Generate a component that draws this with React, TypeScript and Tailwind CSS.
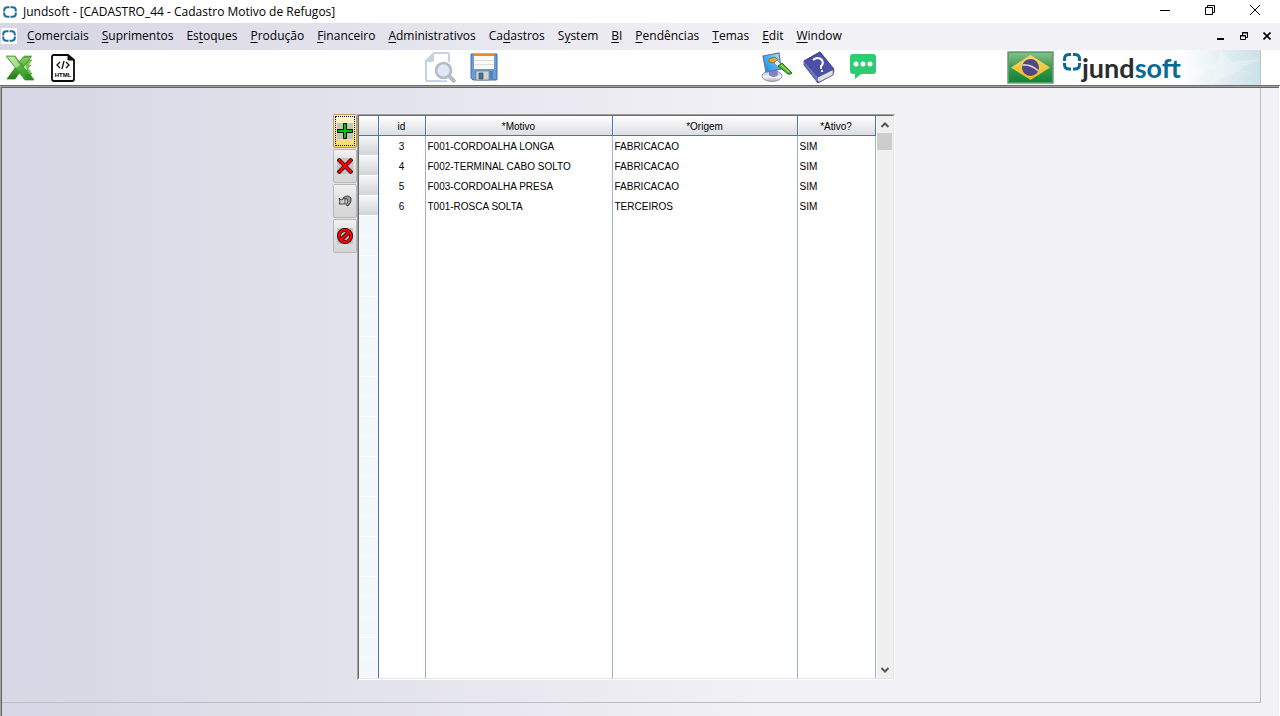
import type { ReactNode } from 'react';

type MenuItem = { before: string; key: string; after: string };

const menus: MenuItem[] = [
  { before: '', key: 'C', after: 'omerciais' },
  { before: '', key: 'S', after: 'uprimentos' },
  { before: 'Es', key: 't', after: 'oques' },
  { before: '', key: 'P', after: 'rodução' },
  { before: '', key: 'F', after: 'inanceiro' },
  { before: '', key: 'A', after: 'dministrativos' },
  { before: 'Ca', key: 'd', after: 'astros' },
  { before: 'S', key: 'y', after: 'stem' },
  { before: '', key: 'B', after: 'I' },
  { before: '', key: 'P', after: 'endências' },
  { before: '', key: 'T', after: 'emas' },
  { before: '', key: 'E', after: 'dit' },
  { before: '', key: 'W', after: 'indow' },
];

const rows = [
  { id: 3, motivo: 'F001-CORDOALHA LONGA', origem: 'FABRICACAO', ativo: 'SIM' },
  { id: 4, motivo: 'F002-TERMINAL CABO SOLTO', origem: 'FABRICACAO', ativo: 'SIM' },
  { id: 5, motivo: 'F003-CORDOALHA PRESA', origem: 'FABRICACAO', ativo: 'SIM' },
  { id: 6, motivo: 'T001-ROSCA SOLTA', origem: 'TERCEIROS', ativo: 'SIM' },
];

const emptyRows = Array.from({ length: 23 }, (_, i) => i);

function RingMark() {
  return (
    <svg className="h-3 w-[14px]" viewBox="0 0 14 12" fill="none" stroke="#1f6f94" strokeWidth="2">
      <path d="M6.500 1.200H4.500Q1.200 1.200 1.200 4.500v1M7.500 1.200h2q3.300 0 3.300 3.300v1M12.800 6.500v1q0 3.300-3.300 3.300h-2M6.500 10.800h-2Q1.200 10.800 1.200 7.500v-1" />
    </svg>
  );
}

function ExcelIcon() {
  return (
    <svg className="h-7 w-7" viewBox="0 0 28 28">
      <defs>
        <linearGradient id="xl" x1="0" y1="0" x2="1" y2="1">
          <stop offset="0" stopColor="#a5da78" />
          <stop offset=".5" stopColor="#4fb035" />
          <stop offset="1" stopColor="#2c9420" />
        </linearGradient>
        <linearGradient id="xlArm" x1="0" y1="0" x2="0" y2="1">
          <stop offset="0" stopColor="#8ccf62" />
          <stop offset="1" stopColor="#1f7d16" />
        </linearGradient>
      </defs>
      <path d="M18 2h8l-4 4h4l-4 5h3l-3 3 4 6h-4z" fill="#7cc557" stroke="#4f9f38" strokeWidth=".6" />
      <path d="M17 3h8L9 25H1z" fill="url(#xlArm)" stroke="#2c7e1d" strokeWidth=".7" />
      <path d="M0 2h9l19 24h-9z" fill="url(#xl)" stroke="#378c25" strokeWidth=".7" />
      <path d="M2 3h6l6 8-4 3z" fill="#dcf3c0" opacity=".6" />
      <path d="M19 20h6l3 6h-8z" fill="#1f8518" opacity=".5" />
    </svg>
  );
}

function HtmlIcon() {
  return (
    <svg className="h-7 w-6" viewBox="0 0 24 28">
      <path d="M3 1h14l6 5v19q0 2-2 2H3q-2 0-2-2V3q0-2 2-2z" fill="#fff" stroke="#0b0b0b" strokeWidth="1.800" />
      <path d="M17 1v5h6z" fill="#111" stroke="#111" />
      <path d="M9 8l-3 3 3 3M15 8l3 3-3 3M13 7l-2 8" fill="none" stroke="#111" strokeWidth="1.300" />
      <text x="12" y="23" textAnchor="middle" fontFamily="Liberation Sans, sans-serif" fontSize="6" fontWeight="700">HTML</text>
    </svg>
  );
}

function PreviewIcon() {
  return (
    <svg className="h-8 w-8" viewBox="0 0 32 32" fill="none">
      <path d="M23 30H4q-2 0-2-2V10l8-8h13q2 0 2 2v7" stroke="#c5d3e6" strokeWidth="2.200" />
      <path d="M1 11L10 1v8q0 2-2 2z" fill="#c5d3e6" />
      <circle cx="19.500" cy="19.500" r="10" fill="#fff" />
      <circle cx="19.500" cy="19.500" r="7.500" fill="#e1e8f5" stroke="#b4bdc7" strokeWidth="2.700" />
      <path d="M25 25l6 6" stroke="#b4bdc7" strokeWidth="4" />
    </svg>
  );
}

function SaveIcon() {
  return (
    <svg className="h-7 w-7" viewBox="0 0 28 28">
      <path d="M1 1h26v25q0 1-1 1H3l-2-2z" fill="#6a9bd4" stroke="#426fa8" />
      <path d="M4 1h20v3H4z" fill="#f08621" />
      <path d="M4 3h20v13H4z" fill="#f8f9f8" />
      <path d="M4 7.500h20M4 11.500h20" stroke="#dde0e2" />
      <path d="M6 18h13v9H6z" fill="#d4d5ca" stroke="#737d83" strokeWidth=".7" />
      <path d="M9 20h4v6H9z" fill="#47749e" stroke="#304e70" strokeWidth=".7" />
      <path d="M20 18h3v8h-3z" fill="#4d83be" />
    </svg>
  );
}

function ThemeIcon() {
  return (
    <svg className="h-8 w-8" viewBox="0 0 32 32">
      <defs>
        <linearGradient id="scr" x1="0" y1="1" x2="1" y2="0">
          <stop offset="0" stopColor="#1686f0" /><stop offset=".6" stopColor="#55b8f5" /><stop offset="1" stopColor="#c5eeff" />
        </linearGradient>
        <linearGradient id="base" x1="0" y1="0" x2="0" y2="1"><stop offset="0" stopColor="#b9b7e0" /><stop offset=".6" stopColor="#f4f4fa" /><stop offset="1" stopColor="#a9a8bd" /></linearGradient>
      </defs>
      <ellipse cx="11" cy="25" rx="10" ry="5.500" fill="url(#base)" stroke="#88879f" strokeWidth=".8" />
      <path d="M8 18h8l1 6q-4 4-9 0z" fill="#8683bb" />
      <path d="M2 5l16-3 2 16-15 3z" fill="url(#scr)" stroke="#5f7590" strokeWidth="1.200" />
      <path d="M8 8l6-2 3 3-5 3-4-1z" fill="#e5a727" stroke="#765f29" strokeWidth=".7" />
      <path d="M13 12l3-3 4 4-3 3z" fill="#e5edf5" stroke="#758296" strokeWidth=".7" />
      <path d="M17 15l4-3 10 10q-2 2-4 1z" fill="#52b82c" stroke="#276d21" />
      <path d="M20 14l8 7" stroke="#b9ea82" />
    </svg>
  );
}

function HelpIcon() {
  return (
    <svg className="h-8 w-8" viewBox="0 0 32 32">
      <path d="M1 10L17 1l14 18-1 5-15 8L1 14z" fill="#3d408b" stroke="#31366f" strokeWidth=".7" />
      <path d="M15 25l15-7v6l-14 7-2-2z" fill="#dedee7" stroke="#77798f" strokeWidth=".7" />
      <path d="M1 10L17 1l14 17-16 8z" fill="#4b50ab" stroke="#363878" strokeWidth=".7" />
      <path d="M1 10l14 16-1 5L1 13z" fill="#6873bd" />
      <path d="M10 9q5-4 9 0 2 4-1 6v3M18 20h2" fill="none" stroke="#fff" strokeWidth="2" />
    </svg>
  );
}

function ChatIcon() {
  return (
    <svg className="h-7 w-7" viewBox="0 0 28 28">
      <path d="M4 1h20q3 0 3 3v14q0 3-3 3H12l-6 5v-5H4q-3 0-3-3V4q0-3 3-3z" fill="#2ecc71" />
      <circle cx="7" cy="11" r="2.500" fill="#fff" /><circle cx="14" cy="11" r="2.500" fill="#fff" /><circle cx="21" cy="11" r="2.500" fill="#fff" />
    </svg>
  );
}

function BrazilFlag() {
  return (
    <svg className="h-[33px] w-[47px]" viewBox="0 0 47 33">
      <defs>
        <linearGradient id="flag" x1="0" y1="0" x2="0" y2="1"><stop offset="0" stopColor="#8cc28e" /><stop offset=".5" stopColor="#3d9850" /><stop offset="1" stopColor="#078236" /></linearGradient>
        <linearGradient id="diamond" x1="0" y1="0" x2="0" y2="1"><stop offset="0" stopColor="#f5d878" /><stop offset="1" stopColor="#ecb90f" /></linearGradient>
      </defs>
      <path d="M.5.500h46v32H.5z" fill="url(#flag)" stroke="#a3aaa2" />
      <path d="M1.500 1.500h44v30h-44z" fill="none" stroke="#55a166" />
      <path d="M4 16.500L23.500 4 43 16.500 23.500 29z" fill="url(#diamond)" />
      <circle cx="23.500" cy="16.500" r="8.500" fill="#504783" />
      <path d="M15.500 14q8-1 16 6" stroke="#ced1d8" strokeWidth="1.500" fill="none" />
    </svg>
  );
}

function JundsoftLogo() {
  return (
    <div className="flex items-start">
      <svg className="h-5 w-5 shrink-0" viewBox="0 0 20 20" fill="none" stroke="#0b6a95" strokeWidth="3">
        <path d="M9 3.500H7Q2.500 3.500 2.500 8v2M11 3.500h2q4.500 0 4.500 4.500v2M17.500 12v1.500q0 4.500-4.500 4.500h-2M9 18H7q-4.500 0-4.500-4.500V12" />
      </svg>
      <span className="font-['Lato',sans-serif] text-[27px] leading-[34px] font-bold text-[#2b2c2e]">
        jund<span className="text-[#0b6a95]">soft</span>
      </span>
    </div>
  );
}

function ToolButton({ label, active = false, children }: { label: string; active?: boolean; children: ReactNode }) {
  return (
    <button
      type="button"
      aria-label={label}
      className={
        active
          ? 'flex h-[34px] w-6 items-center justify-center rounded-xs border border-[#c19a51] bg-linear-to-b from-[#fdf6dc] to-[#f8d967] p-px'
          : 'flex h-[34px] w-6 items-center justify-center rounded-xs border border-[#b8b8bb] bg-linear-to-b from-[#f1f1f1] via-[#dedede] to-[#d5d5d5] p-px'
      }
    >
      <span className={active ? 'flex h-full w-full items-center justify-center border border-dotted border-black' : 'flex h-full w-full items-center justify-center'}>
        {children}
      </span>
    </button>
  );
}

export default function App() {
  return (
    <div className="flex min-h-screen flex-col bg-white font-['Open_Sans',sans-serif] text-xs text-black">
      <header className="flex h-[23px] items-center pl-[3px]">
        <RingMark />
        <h1 className="ml-[6px] text-[12px] leading-4">Jundsoft - [CADASTRO_44 - Cadastro Motivo de Refugos]</h1>
        <div className="ml-auto flex items-center gap-[35px] pr-5 pb-[3px]">
          <button type="button" aria-label="Minimizar"><svg className="h-[10px] w-[10px]" viewBox="0 0 10 10"><path d="M0 5.500h10" stroke="#000" /></svg></button>
          <button type="button" aria-label="Restaurar"><svg className="h-[10px] w-[10px]" viewBox="0 0 10 10" fill="none" stroke="#000"><path d="M.5 2.500h7v7h-7zM2.500 2.500v-2h7v7h-2" /></svg></button>
          <button type="button" aria-label="Fechar"><svg className="h-[10px] w-[10px]" viewBox="0 0 10 10" stroke="#000"><path d="M0 0l10 10M10 0L0 10" /></svg></button>
        </div>
      </header>

      <nav className="flex h-[27px] items-center bg-linear-to-r from-[#d6d6e4] to-[#f2f1f6] to-60% pb-px pl-px">
        <span className="flex h-4 w-4 items-center justify-center bg-white"><RingMark /></span>
        <div className="ml-[10px] flex gap-[13px]">
          {menus.map((m) => (
            <button type="button" key={m.before + m.key + m.after} className="text-[12px] leading-4 whitespace-nowrap">
              {m.before}<span className="underline underline-offset-2">{m.key}</span>{m.after}
            </button>
          ))}
        </div>
        <div className="ml-auto flex items-center gap-[15px] pr-[9px]">
          <button type="button" aria-label="Minimizar janela"><svg className="h-2 w-2" viewBox="0 0 8 8"><path d="M0 7h7" stroke="#000" strokeWidth="2" /></svg></button>
          <button type="button" aria-label="Restaurar janela"><svg className="h-2 w-2" viewBox="0 0 8 8" fill="none" stroke="#000"><path d="M.5 3.500h5v4h-5zM0 4h6M2.500 3V.500h5v5H6M2 1h6" /></svg></button>
          <button type="button" aria-label="Fechar janela"><svg className="h-2 w-2" viewBox="0 0 8 8" stroke="#000" strokeWidth="1.600"><path d="M.5.500l7 7M7.500.500l-7 7" /></svg></button>
        </div>
      </nav>

      <div className="flex h-9 items-center border-b border-[#696d69]">
        <div className="flex w-[33%] items-center gap-[17px] pl-[6px]">
          <button type="button" aria-label="Exportar para Excel"><ExcelIcon /></button>
          <button type="button" aria-label="Exportar para HTML"><HtmlIcon /></button>
        </div>
        <div className="flex flex-1 items-center gap-[14px] pb-px pl-[2px]">
          <button type="button" aria-label="Visualizar"><PreviewIcon /></button>
          <button type="button" aria-label="Salvar"><SaveIcon /></button>
        </div>
        <div className="flex items-center gap-[10px] pb-px">
          <button type="button" aria-label="Temas"><ThemeIcon /></button>
          <button type="button" aria-label="Ajuda"><HelpIcon /></button>
          <button type="button" aria-label="Mensagens" className="pl-1"><ChatIcon /></button>
        </div>
        <div className="ml-[130px] flex h-full items-center">
          <BrazilFlag />
          <div className="ml-1 flex h-full w-[203px] items-center border-r border-[#b9c4cb] bg-linear-to-r from-white from-60% to-[#cbe1e8] pl-1">
            <JundsoftLogo />
            <svg className="h-full w-0 flex-1" viewBox="0 0 76 35" preserveAspectRatio="none" fill="#fff" opacity=".25"><path d="M0 17l76-8-21 11 15 3-44-3L0 35zM38 0l18 20L28 35z" /></svg>
          </div>
        </div>
        <div className="w-[19px]" />
      </div>

      <main className="mr-px flex flex-1 flex-col border-t border-l border-[#a0a3a0] bg-linear-to-r from-[#d6d6e4] to-[#f2f1f6] to-60%">
        <div className="flex flex-1 flex-col border-t border-l border-[#626562]">
          <div className="mr-[18px] mb-[13px] flex flex-1 justify-center border-r border-b border-[#bebec0] pt-[26px] pb-[22px]">
            <div className="mr-[35px] flex">
              <aside className="flex flex-col gap-px">
                <ToolButton label="Incluir" active>
                  <svg className="h-4 w-4" viewBox="0 0 16 16"><path d="M0 0h16v16H0z" fill="#c4c4c4" /><path d="M6.500.500h3v6h6v3h-6v6h-3v-6h-6v-3h6z" fill="#00c800" stroke="#000" /></svg>
                </ToolButton>
                <ToolButton label="Excluir">
                  <svg className="h-4 w-4" viewBox="0 0 16 16"><path d="M0 0h16v16H0z" fill="#c4c4c4" /><path d="M1 1l14 14M15 1L1 15" stroke="#000" strokeWidth="4" /><path d="M1.500 1.500l13 13M14.500 1.500l-13 13" stroke="#f00" strokeWidth="2.500" /></svg>
                </ToolButton>
                <ToolButton label="Desfazer">
                  <svg className="h-[14px] w-[14px]" viewBox="0 0 14 14" stroke="#333" strokeWidth=".9"><path d="M5 4q5-4 8 0 1 4-3 8l-2-1q3-4 1-6-1-1-3 1z" fill="#999" /><path d="M1 4l2 2 4-2v6H1l1-2z" fill="#d0d0d0" /></svg>
                </ToolButton>
                <ToolButton label="Cancelar">
                  <svg className="h-4 w-4" viewBox="0 0 16 16"><path d="M0 0h16v16H0z" fill="#c4c4c4" /><g fill="none"><circle cx="8" cy="8" r="6" stroke="#000" strokeWidth="4" /><path d="M4 12l8-8" stroke="#000" strokeWidth="4" /><circle cx="8" cy="8" r="6" stroke="#f00" strokeWidth="2.500" /><path d="M4 12l8-8" stroke="#f00" strokeWidth="2.500" /></g></svg>
                </ToolButton>
              </aside>

              <section className="flex border border-t-[#a0a0a0] border-r-white border-b-white border-l-[#a0a0a0]">
                <div className="flex border border-t-[#696969] border-r-[#e3e3e3] border-b-[#e3e3e3] border-l-[#696969] bg-white">
                  <table className="h-full w-[517px] table-fixed border-separate border-spacing-0 font-['Liberation_Sans',sans-serif] text-[10px] leading-4">
                    <colgroup>
                      <col className="w-5" /><col className="w-[47px]" /><col className="w-[187px]" /><col className="w-[185px]" /><col className="w-[78px]" />
                    </colgroup>
                    <thead>
                      <tr className="h-5">
                        <td className="border-r border-b border-[#3c78c8] bg-linear-to-b from-white to-[#dcdde1] p-0" />
                        {['id', '*Motivo', '*Origem', '*Ativo?'].map((h) => (
                          <th key={h} scope="col" className="border-r border-b border-[#3c78c8] bg-linear-to-b from-white to-[#dcdde1] p-0 pt-[2px] font-normal shadow-[inset_1px_1px_0_#fff]">{h}</th>
                        ))}
                      </tr>
                    </thead>
                    <tbody>
                      {rows.map((r) => (
                        <tr key={r.id} className="h-5">
                          <td className="border-r border-[#3c78c8] bg-linear-to-b from-[#f5f6f7] to-[#d0d3d7] p-0 shadow-[inset_0_-1px_0_#fff]" />
                          <td className="border-r border-[#9ab3d5] p-0 pt-[2px] text-center">{r.id}</td>
                          <td className="border-r border-[#9ab3d5] p-0 pt-[2px] pl-[2px]">{r.motivo}</td>
                          <td className="border-r border-[#9ab3d5] p-0 pt-[2px] pl-[2px]">{r.origem}</td>
                          <td className="border-r border-[#9ab3d5] p-0 pt-[2px] pl-[2px]">{r.ativo}</td>
                        </tr>
                      ))}
                      {emptyRows.map((n) => (
                        <tr key={n} className="h-5">
                          <td className="border-r border-[#3c78c8] bg-[#f4f7fc] p-0 shadow-[inset_0_-1px_0_#fff]" />
                          <td className="border-r border-[#9ab3d5] p-0" />
                          <td className="border-r border-[#9ab3d5] p-0" />
                          <td className="border-r border-[#9ab3d5] p-0" />
                          <td className="border-r border-[#9ab3d5] p-0" />
                        </tr>
                      ))}
                    </tbody>
                  </table>
                  <div className="ml-px flex w-4 flex-col items-center bg-[#f0f0f0]">
                    <button type="button" aria-label="Rolar para cima" className="flex h-[17px] w-full items-center justify-center"><svg className="h-[6px] w-2" viewBox="0 0 8 6" fill="none" stroke="#555" strokeWidth="2"><path d="M.5 5L4 1.500 7.500 5" /></svg></button>
                    <div className="h-[17px] w-[15px] bg-[#cdcdcd]" />
                    <button type="button" aria-label="Rolar para baixo" className="mt-auto flex h-[17px] w-full items-center justify-center"><svg className="h-[6px] w-2" viewBox="0 0 8 6" fill="none" stroke="#555" strokeWidth="2"><path d="M.5 1L4 4.500 7.500 1" /></svg></button>
                  </div>
                </div>
              </section>
            </div>
          </div>
        </div>
      </main>
    </div>
  );
}
